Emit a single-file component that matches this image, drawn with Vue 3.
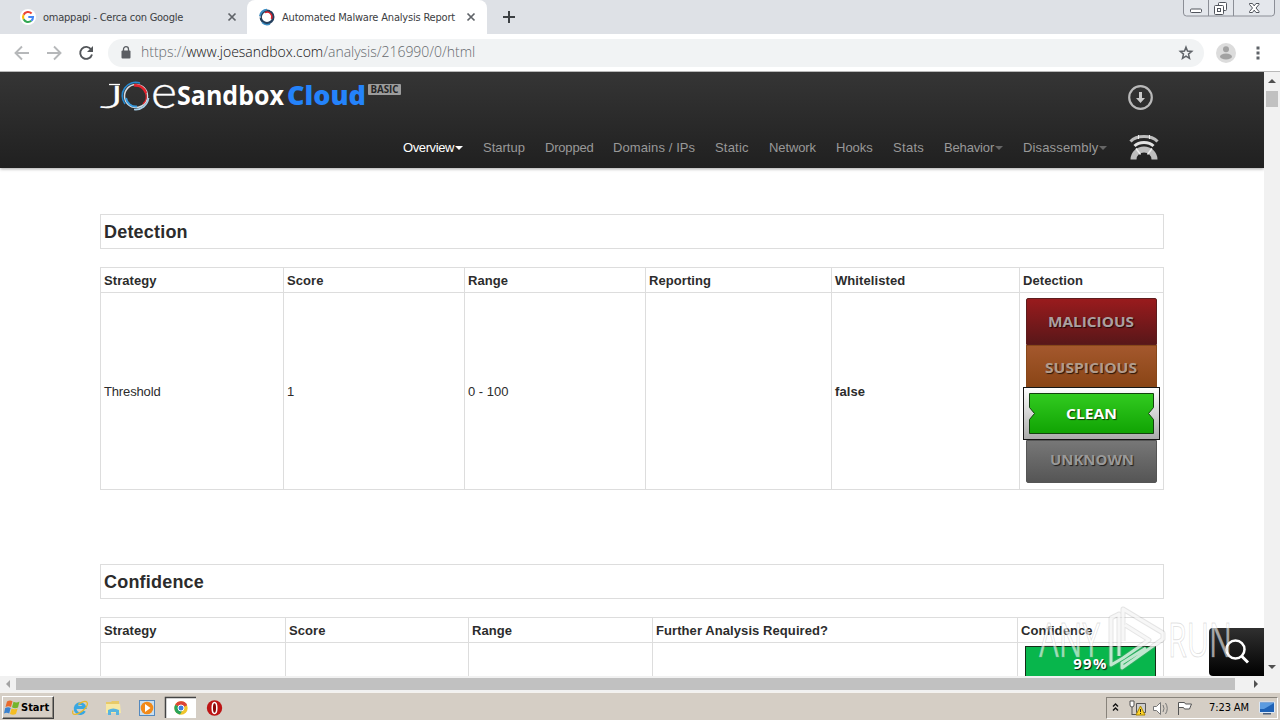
<template>
  <div class="screen">
    <!-- tab strip -->
    <div class="tabs">
      <div class="tab first">
        <svg class="favicon" width="16" height="16" viewBox="0 0 16 16">
          <circle cx="8" cy="8" r="8" fill="#fff" />
          <g fill="none" stroke-width="2.1">
            <path d="M11.6 4.5A5 5 0 0 0 3.6 5.7" stroke="#ea4335" />
            <path d="M3.6 5.7A5 5 0 0 0 3.6 10.3" stroke="#fbbc05" />
            <path d="M3.6 10.3A5 5 0 0 0 11.3 11.8" stroke="#34a853" />
            <path d="M11.3 11.8A5 5 0 0 0 13 8H8.3" stroke="#4285f4" />
          </g>
        </svg>
        <span class="tab-title t1">omappapi - Cerca con Google</span>
        <svg class="close" width="10" height="10" viewBox="0 0 10 10"><path d="M1.5 1.5l7 7m0-7l-7 7" /></svg>
      </div>
      <div class="tab active">
        <svg class="favicon" width="18" height="18" viewBox="0 0 18 18">
          <g fill="none">
            <circle cx="9" cy="9" r="6.3" stroke="#24405e" stroke-width="2.4" />
            <path d="M2 8A7 7 0 0 1 9 1.7" stroke="#3a8dc4" stroke-width="1.8" />
            <path d="M7 4.6A4.900 4.900 0 0 1 13.500 11" stroke="#d8232e" stroke-width="1.500" />
            <path d="M4 14.500A7.400 7.400 0 0 0 12 16" stroke="#3a8dc4" stroke-width="1.400" />
            <path d="M1 9h2M12.500 2.500l1.500-1.500" stroke="#fff" />
          </g>
        </svg>
        <span class="tab-title t2">Automated Malware Analysis Report</span>
        <svg class="close" width="10" height="10" viewBox="0 0 10 10"><path d="M1.5 1.5l7 7m0-7l-7 7" /></svg>
      </div>
      <svg class="plus" width="12" height="12" viewBox="0 0 12 12"><path d="M6 0v12M0 6h12" /></svg>
      <svg class="win" width="94" height="18" viewBox="0 0 94 18">
        <path d="M1.5 0v13q0 3 3 3h85q3 0 3-3V0M26.500 0v16M51.500 0v16" fill="#e4e7ec" stroke="#8b8e96" />
        <g fill="#fff" stroke="#50545c">
          <rect x="8.500" y="9" width="11" height="3.500" rx="1" />
          <rect x="36.500" y="2.500" width="8" height="8" rx="1" />
          <rect x="32.500" y="5.500" width="9" height="9" rx="1" />
          <rect x="35.500" y="8.500" width="3" height="3" />
          <path d="M67.500 3.500h3l1.700 2.400 1.800-2.400h3v1l-3 3.500 3 3.500v1h-3l-1.800-2.400-1.700 2.400h-3v-1l3-3.500-3-3.500z" />
        </g>
      </svg>
    </div>

    <!-- toolbar -->
    <div class="toolbar">
      <svg class="nav-icons" width="108" height="32" viewBox="0 0 108 32">
        <g fill="none" stroke-width="1.900">
          <path d="M29 16H16.500M22 9.500L15.500 16l6.500 6.500" stroke="#b6b8ba" />
          <path d="M47 16h12.500M54 9.500l6.500 6.500-6.500 6.500" stroke="#b6b8ba" />
          <path d="M91.200 12.500A6 6 0 1 0 92 17.500" stroke="#53565a" />
        </g>
        <path d="M93 9v6h-6z" fill="#53565a" />
      </svg>
      <div class="omnibox">
        <svg width="10" height="13" viewBox="0 0 10 13">
          <rect x="0.500" y="4.500" width="9" height="8" rx="1" fill="#5b5e63" />
          <path d="M2.500 5V3.200a2.500 2.500 0 0 1 5 0V5" fill="none" stroke="#5b5e63" stroke-width="1.300" />
        </svg>
        <span class="url">https://<b>www.joesandbox.com</b>/analysis/216990/0/html</span>
        <svg class="star" width="16" height="16" viewBox="0 0 16 16">
          <path d="M8 2.200l1.500 3.900 4.200.3-3.200 2.700 1 4.200L8 11.100l-3.500 2.200 1-4.200-3.200-2.700 4.200-.3z" />
        </svg>
      </div>
      <svg class="avatar" width="20" height="20" viewBox="0 0 20 20">
        <circle cx="10" cy="10" r="10" fill="#dcdcdc" />
        <circle cx="10" cy="6.300" r="3" fill="#a2a2a2" />
        <ellipse cx="10" cy="13.500" rx="6" ry="3" fill="#a2a2a2" />
      </svg>
      <svg class="dots" width="4" height="14" viewBox="0 0 4 14">
        <path d="M.5.500h3v3h-3zM.5 5.500h3v3h-3zM.5 10.500h3v3h-3z" fill="#5f6368" />
      </svg>
    </div>

    <div class="viewport">
      <div class="page">
        <div class="header">
          <div class="brand">
            <svg class="logo" width="304" height="36" viewBox="0 0 304 36">
              <text class="thin" x="0" y="29.500" font-size="31" textLength="24" lengthAdjust="spacingAndGlyphs">J</text>
              <path d="M9 6.500h11" stroke="#fff" stroke-width="1.300" />
              <g fill="none">
                <circle cx="36" cy="18" r="11.500" stroke="#d6dce2" stroke-width="1.500" />
                <path d="M25 26A13.500 13.500 0 0 1 40 5" stroke="#2589d2" stroke-width="1.600" />
                <path d="M34 7.500A10.700 10.700 0 0 1 46 15" stroke="#e3222c" stroke-width="2.600" />
                <path d="M45.500 15A10 10 0 0 1 43 26" stroke="#e3222c" stroke-width="1.200" />
                <path d="M26 20A10 10 0 0 0 37 28.500" stroke="#3b9de0" stroke-width="2" />
                <path d="M48.500 20A13 13 0 0 1 34 31.500" stroke="#a7cfe9" stroke-width="1.700" />
              </g>
              <text class="thin" x="51" y="29.500" font-size="46" textLength="26" lengthAdjust="spacingAndGlyphs">e</text>
              <text class="bold" x="77" y="26.500" font-size="27" fill="#fff" textLength="107" lengthAdjust="spacingAndGlyphs">Sandbox</text>
              <text class="bold cloud" x="187" y="26.500" font-size="27" fill="#2483fb" textLength="79" lengthAdjust="spacingAndGlyphs">Cloud</text>
              <rect x="268" y="6" width="33" height="11" rx="1" fill="#9c9c9c" />
              <text class="bold" x="270.500" y="15" font-size="10" fill="#252525" textLength="28" lengthAdjust="spacingAndGlyphs">BASIC</text>
            </svg>
            <svg class="download" width="27" height="27" viewBox="0 0 27 27">
              <circle cx="13.500" cy="13.500" r="11.300" fill="none" stroke="#b9b9b9" stroke-width="2.200" />
              <path d="M12 8h3v6h3l-4.500 5L9 14h3z" fill="#c9c9c9" />
            </svg>
          </div>
          <div class="menu">
            <div v-for="item in menu" :key="item.label" class="menu-item" :class="{ current: item.current }" :style="{ width: item.width + 'px' }">
              <span :style="{ letterSpacing: item.spacing + 'px' }">{{ item.label }}</span><i v-if="item.drop" class="caret"></i>
            </div>
            <svg class="signal" width="30" height="26" viewBox="0 0 30 26">
              <g fill="none" stroke="#bdbdbd">
                <path d="M1.500 7.500Q6 2.500 15 2.500T28.500 7.500" stroke-width="3" />
                <path d="M5.500 12Q9 8.500 15 8.500T24.500 12" stroke="#e2e2e2" stroke-width="3" />
                <path d="M4.500 25.500A10.500 10 0 0 1 25.500 25.500" stroke-width="6" />
                <path d="M7 14.500l4.500 6M23 14.500l-4.500 6" stroke="#eee" stroke-width="1.500" />
                <path d="M9.500 1v4M20.500 1v4" stroke="#eee" />
              </g>
            </svg>
          </div>
        </div>

        <div class="content">
          <h2>Detection</h2>
          <div class="table detection">
            <div v-for="h in detectionHeads" :key="h" class="cell head">{{ h }}</div>
            <div class="cell threshold">Threshold</div>
            <div class="cell">1</div>
            <div class="cell range">0 - 100</div>
            <div class="cell"></div>
            <div class="cell strong">false</div>
            <div class="cell verdicts">
              <div v-for="v in verdicts" :key="v.name" class="verdict" :class="v.name.toLowerCase()">
                <svg v-if="v.name === 'CLEAN'" class="clean-shape" width="137" height="53" viewBox="0 0 137 53">
                  <defs>
                    <linearGradient id="frame" x2="0" y2="1"><stop stop-color="#fff" /><stop offset="1" stop-color="#aaa" /></linearGradient>
                    <linearGradient id="green" x2="0" y2="1"><stop stop-color="#32cb20" /><stop offset="1" stop-color="#10a303" /></linearGradient>
                  </defs>
                  <rect x=".5" y=".5" width="136" height="52" fill="url(#frame)" stroke="#151515" />
                  <path d="M6.500 6.500h124v14l-5 6 5 6v14H6.500v-14l5-6-5-6z" fill="url(#green)" stroke="#12420e" />
                </svg>
                <svg class="label" width="131" height="30" viewBox="0 0 131 30">
                  <text :x="v.x" y="20" :fill="v.color" :textLength="v.length" lengthAdjust="spacingAndGlyphs">{{ v.name }}</text>
                </svg>
              </div>
            </div>
          </div>

          <h2 class="second">Confidence</h2>
          <div class="table confidence">
            <div v-for="h in confidenceHeads" :key="h" class="cell head">{{ h }}</div>
            <div v-for="n in 4" :key="n" class="cell"></div>
            <div class="cell score-cell"><div class="score">99%</div></div>
          </div>
        </div>

        <div class="search">
          <svg width="30" height="30" viewBox="0 0 30 30" fill="none" stroke="#fff">
            <circle cx="13.500" cy="12.500" r="9" stroke-width="2.500" />
            <path d="M19.500 19l6.500 6.500" stroke-width="3" />
          </svg>
        </div>
        <svg class="watermark" width="204" height="70" viewBox="0 0 204 70">
          <g class="mark">
            <text x="5" y="51" textLength="61" lengthAdjust="spacingAndGlyphs">ANY</text>
            <text x="134" y="51" textLength="64" lengthAdjust="spacingAndGlyphs">RUN</text>
          </g>
          <g fill="none" stroke-linejoin="round">
            <g stroke="#999" stroke-opacity=".25" stroke-width="5">
              <path d="M85 50V8l-8 4v47l12-7 26-18-24-15M89 35V3l40 24v6L88 62v-5l24-15" />
            </g>
            <g stroke="#fff" stroke-opacity=".7" stroke-width="3">
              <path d="M85 50V8l-8 4v47l12-7 26-18-24-15M89 35V3l40 24v6L88 62v-5l24-15" />
            </g>
          </g>
        </svg>
      </div>
      <div class="vscroll">
        <i class="arrow up"></i>
        <i class="vthumb"></i>
        <i class="arrow down"></i>
      </div>
    </div>
    <div class="hscroll">
      <i class="arrow left"></i>
      <i class="hthumb"></i>
      <i class="arrow right"></i>
    </div>

    <!-- taskbar -->
    <div class="taskbar">
      <div class="start">
        <svg width="17" height="17" viewBox="0 0 17 17">
          <path d="M3 2.500q3-2 5.500-.3L7 8Q4.500 6.500 1.500 8z" fill="#e96a2c" />
          <path d="M9.500 2.800q3 1.500 6-.3L14 8.500q-3 1.500-6-.2z" fill="#74b52c" />
          <path d="M1.200 9q3-1.500 5.500 0L5.200 14.500q-2.500-1.500-5.200 0z" fill="#3b82cf" />
          <path d="M7.600 9.500q3 1.500 6 0L12 15q-3 1.500-6 0z" fill="#f4bd22" />
        </svg>
        <span>Start</span>
      </div>
      <svg class="quick" width="160" height="24" viewBox="0 0 160 24">
        <g fill="none">
          <path d="M14.500 15A5 5 0 1 1 15 11.500H5.500" stroke="#39a7e2" stroke-width="2.800" />
          <ellipse cx="10" cy="12" rx="9" ry="3.800" transform="rotate(-38 10 12)" stroke="#e9b928" stroke-width="1.300" stroke-dasharray="24 8" />
        </g>
        <g transform="translate(35 3)">
          <path d="M1 3h5l1-1h7v11H1z" fill="#e8ca68" />
          <path d="M1 5h14l1 9H1z" fill="#f7e8a3" />
          <path d="M3 16v-5q5-3 11 0v5h-3v-3H6v3z" fill="#58b5df" />
        </g>
        <rect x="69.500" y="4.500" width="15" height="15" fill="#c9dff0" stroke="#5489be" />
        <circle cx="77" cy="12" r="6.300" fill="#f28a19" />
        <path d="M75 8l5.500 4-5.500 4z" fill="#fff" />
        <path d="M96 1h30v21H96z" fill="#fff" />
        <path d="M95.500 22V1.500H126" fill="none" stroke="#444" stroke-width="1.500" />
        <circle cx="111" cy="12" r="6.700" fill="#f0c52c" />
        <path d="M111 12L105.200 8.700A6.700 6.700 0 0 1 117.200 9.200z" fill="#dc4437" />
        <path d="M111 12L105.200 8.700A6.700 6.700 0 0 0 110 18.600l3-5z" fill="#2aa45a" />
        <circle cx="111" cy="12" r="3" fill="#3f7fe0" stroke="#fff" />
        <circle cx="144.500" cy="12" r="7.700" fill="#bd1515" />
        <ellipse cx="144.500" cy="12" rx="2.300" ry="5.500" fill="#8b0808" stroke="#fff" stroke-width="1.500" />
      </svg>
      <div class="tray">
        <svg width="90" height="20" viewBox="0 0 90 20" fill="none">
          <path d="M6 8.500L8.500 6 11 8.500M6 12.500L8.500 10l2.500 2.500" stroke="#111" stroke-width="1.400" />
          <path d="M29.500 5.500h9v9h-9z" stroke="#555" fill="#ccc" />
          <path d="M23 3v4q0 2 2 2t2-2V3zM25 9v8M25 16.500h6" stroke="#555" fill="#fff" />
          <path d="M33.500 8l4.500 9h-9z" fill="#ffd52b" stroke="#a98500" />
          <path d="M33.500 11v3M33.500 15v1" stroke="#222" />
          <path d="M46.500 8.500h3l4-4v12l-4-4h-3z" fill="#fff" stroke="#777" />
          <path d="M56 7q2 3.500 0 7M58.500 5q3.500 5.500 0 11" stroke="#777" />
          <path d="M71.500 17V4.500h6l1 1.500h6l-2 5h-5l-1-1.500h-5" fill="#fff" stroke="#555" />
        </svg>
        <span>7:23 AM</span>
        <svg width="16" height="16" viewBox="0 0 16 16">
          <path d="M.5 2h15v10.500H.5z" fill="#1f62b6" stroke="#dbe7f5" />
          <path d="M1 3h14L5 9H1z" fill="#5b9be0" />
          <path d="M4 13h8v1.500H4z" fill="#4a5f7b" />
        </svg>
      </div>
    </div>
  </div>
</template>

<script setup>
  import { ref } from 'vue';

  const menu = ref([
    { label: 'Overview', width: 80, spacing: -0.4, current: true, drop: true },
    { label: 'Startup', width: 62, spacing: 0 },
    { label: 'Dropped', width: 68, spacing: -0.2 },
    { label: 'Domains / IPs', width: 102, spacing: 0.1 },
    { label: 'Static', width: 54, spacing: 0.2 },
    { label: 'Network', width: 67, spacing: -0.1 },
    { label: 'Hooks', width: 57, spacing: 0 },
    { label: 'Stats', width: 51, spacing: 0.3 },
    { label: 'Behavior', width: 79, spacing: -0.15, drop: true },
    { label: 'Disassembly', width: 106, spacing: 0.15, drop: true }
  ])

  const detectionHeads = ['Strategy', 'Score', 'Range', 'Reporting', 'Whitelisted', 'Detection']
  const confidenceHeads = ['Strategy', 'Score', 'Range', 'Further Analysis Required?', 'Confidence']

  const verdicts = [
    { name: 'MALICIOUS', x: 22, length: 86, color: '#aba0a0' },
    { name: 'SUSPICIOUS', x: 19, length: 92, color: '#b29c8c' },
    { name: 'CLEAN', x: 40, length: 51, color: '#ffffff' },
    { name: 'UNKNOWN', x: 24, length: 84, color: '#999999' }
  ]
</script>

<style>
body {
    margin: 0;
    overflow: hidden;
}
</style>

<style scoped>
.screen {
    width: 1280px;
    height: 720px;
    overflow: hidden;
    display: flex;
    flex-direction: column;
    background: #fff;
    color: #2c2c2c;
    font-family: "Liberation Sans", sans-serif;
    font-size: 13px;
}

svg {
    display: block;
    flex: none;
}

.tabs {
    height: 34px;
    flex: none;
    display: flex;
    align-items: center;
    background: #dee1e6;
    font-family: "DejaVu Sans Condensed", "DejaVu Sans", sans-serif;
    font-size: 11px;
    color: #3c4043;
}

.tab {
    height: 34px;
    display: flex;
    align-items: center;
    box-sizing: border-box;
}

.first {
    width: 247px;
    padding-left: 20px;
}

.active {
    width: 240px;
    padding-left: 11px;
    background: #fff;
    border-radius: 8px 8px 0 0;
}

.tab-title {
    white-space: nowrap;
}

.t1 {
    width: 184px;
    margin-left: 7px;
    letter-spacing: -0.24px;
}

.t2 {
    width: 173px;
    margin-left: 6px;
    margin-right: 11px;
    letter-spacing: -0.19px;
}

.close path {
    stroke: #5f6368;
    stroke-width: 1.7;
}

.plus {
    margin-left: 16px;
}

.plus path {
    stroke: #3c4043;
    stroke-width: 2;
}

.win {
    margin-left: auto;
    margin-right: 4px;
    align-self: flex-start;
}

.toolbar {
    height: 38px;
    flex: none;
    display: flex;
    align-items: center;
    border-bottom: 1px solid #b8b8b8;
    box-sizing: border-box;
}

.omnibox {
    width: 1096px;
    height: 28px;
    border-radius: 14px;
    background: #f1f3f4;
    box-sizing: border-box;
    padding: 0 10px 0 13px;
    display: flex;
    align-items: center;
}

.url {
    margin-left: 10px;
    margin-top: -2px;
    font: 300 14px "Open Sans", sans-serif;
    letter-spacing: -0.02px;
    color: #666a6e;
    white-space: nowrap;
}

.url b {
    font-weight: 300;
    color: #111;
}

.star {
    margin-left: auto;
}

.star path {
    fill: none;
    stroke: #5f6368;
    stroke-width: 1.5;
}

.avatar {
    margin-left: 12px;
}

.dots {
    margin-left: 20px;
}

.viewport {
    height: 604px;
    flex: none;
    display: flex;
}

.page {
    position: relative;
    width: 1264px;
    height: 604px;
    overflow: hidden;
}

.header {
    height: 96px;
    background: linear-gradient(#353535, #202020);
    box-shadow: 0 1px 3px rgba(0, 0, 0, 0.35);
}

.brand {
    height: 50px;
    padding: 6px 110px 0 100px;
    box-sizing: border-box;
    display: flex;
    justify-content: space-between;
}

.logo, .watermark {
    overflow: visible;
}

.download {
    margin-top: 6px;
}

.thin {
    font-family: Lato, sans-serif;
    font-weight: 300;
    fill: #fff;
    stroke: #fff;
    stroke-width: 0.4px;
}

.bold {
    font-family: "Open Sans", sans-serif;
    font-weight: 700;
}

.cloud {
    font-weight: 800;
}

.menu {
    height: 46px;
    padding-left: 403px;
    display: flex;
    align-items: center;
}

.menu-item {
    display: flex;
    align-items: center;
    color: #999;
    padding-top: 5px;
    white-space: nowrap;
}

.current {
    color: #fff;
}

.caret {
    border: 4px solid transparent;
    border-top-color: currentColor;
    border-bottom: 0;
    margin-left: 1px;
}

.menu-item:not(.current) .caret {
    border-top-color: #666;
}

.signal {
    margin-top: 4px;
}

.content {
    padding: 46px 100px 0;
}

h2 {
    margin: 0 0 18px;
    height: 35px;
    box-sizing: border-box;
    border: 1px solid #ddd;
    padding-left: 3px;
    font-size: 18px;
    line-height: 34px;
    letter-spacing: 0.2px;
}

.second {
    margin-top: 74px;
}

.table {
    display: grid;
    width: 1064px;
    box-sizing: border-box;
    border-left: 1px solid #ddd;
    border-top: 1px solid #ddd;
}

.detection {
    grid-template-columns: 183px 181px 181px 186px 188px 144px;
    grid-template-rows: 25px 197px;
}

.confidence {
    grid-template-columns: 185px 183px 184px 365px 146px;
    grid-template-rows: 25px 120px;
}

.cell {
    box-sizing: border-box;
    border-right: 1px solid #ddd;
    border-bottom: 1px solid #ddd;
    padding-left: 3px;
    display: flex;
    align-items: center;
}

.head, .strong {
    font-weight: bold;
    letter-spacing: 0.08px;
}

.threshold {
    letter-spacing: -0.15px;
}

.verdicts {
    padding-top: 5px;
    display: block;
}

.verdict {
    position: relative;
    width: 131px;
    margin-left: 3px;
    box-sizing: border-box;
    display: flex;
    align-items: center;
    justify-content: center;
}

.label {
    position: relative;
}

.label text {
    font: 700 15px "Open Sans", sans-serif;
    text-shadow: 1px 1px 1px rgba(0, 0, 0, 0.7);
}

.malicious {
    height: 47px;
    background: linear-gradient(#991b1d, #591719);
    border: 1px solid #5d1c1d;
    border-radius: 2px 2px 0 0;
}

.suspicious {
    height: 42px;
    background: linear-gradient(#a4582d, #8a4516);
    border: 1px solid #874719;
    padding-top: 4px;
}

.clean {
    width: 137px;
    height: 53px;
    margin-left: 0;
}

.clean-shape {
    position: absolute;
    left: 0;
    top: 0;
}

.unknown {
    height: 43px;
    background: linear-gradient(#777, #555);
    border: 1px solid #555;
    border-radius: 0 0 2px 2px;
    padding-bottom: 3px;
}

.score-cell {
    display: block;
    padding: 3px 7px;
}

.score {
    height: 40px;
    box-sizing: border-box;
    border: 1px solid #142c17;
    background: #08b64c;
    color: #fff;
    font: 700 15px/32px "Open Sans", sans-serif;
    letter-spacing: 1.3px;
    text-align: center;
    text-shadow: 1px 1px 1px #111;
}

.search {
    position: absolute;
    right: 0;
    bottom: 0;
    width: 55px;
    height: 48px;
    border-radius: 4px 0 0 4px;
    background: linear-gradient(#303030, #000);
    display: flex;
    align-items: center;
    justify-content: center;
}

.watermark {
    position: absolute;
    left: 1034px;
    top: 534px;
}

.mark text {
    font: 400 48px "Open Sans", sans-serif;
    fill: #fff;
    fill-opacity: 0.6;
    stroke: #999;
    stroke-opacity: 0.3;
    stroke-width: 1px;
}

.vscroll {
    width: 16px;
    background: #f1f1f1;
    display: flex;
    flex-direction: column;
    align-items: center;
}

.arrow {
    border: 4px solid transparent;
}

.up {
    border-top: 0;
    border-bottom-color: #505050;
    margin: 7px 0 8px;
}

.vthumb {
    width: 12px;
    height: 16px;
    background: #c1c1c1;
}

.down {
    border-bottom: 0;
    border-top-color: #505050;
    margin-top: auto;
    margin-bottom: 7px;
}

.hscroll {
    height: 16px;
    flex: none;
    display: flex;
    align-items: center;
    background: #f1f1f1;
}

.left {
    border-left: 0;
    border-right-color: #a3a3a3;
    margin: 0 6px;
}

.hthumb {
    width: 1219px;
    height: 12px;
    background: #c1c1c1;
}

.right {
    border-right: 0;
    border-left-color: #505050;
    margin-left: 19px;
}

.taskbar {
    height: 28px;
    flex: none;
    display: flex;
    align-items: center;
    background: #d5cec5;
    border-top: 1px solid #f4f2ef;
    box-sizing: border-box;
    padding: 2px 2px 0 2px;
    color: #000;
}

.start {
    width: 52px;
    height: 23px;
    box-sizing: border-box;
    border: 1px solid;
    border-color: #fff #404040 #404040 #fff;
    box-shadow: inset -1px -1px #8d8880;
    display: flex;
    align-items: center;
    padding-left: 1px;
    font: 700 11px "DejaVu Sans Condensed", "DejaVu Sans", sans-serif;
}

.quick {
    margin-left: 16px;
}

.tray {
    margin-left: auto;
    width: 172px;
    height: 22px;
    box-sizing: border-box;
    border: 1px solid;
    border-color: #88837b #fff #fff #88837b;
    display: flex;
    align-items: center;
    padding-right: 2px;
    font: 11px "DejaVu Sans Condensed", "DejaVu Sans", sans-serif;
}

.tray span {
    width: 51px;
    margin-left: 12px;
    letter-spacing: -0.1px;
    white-space: nowrap;
}
</style>
